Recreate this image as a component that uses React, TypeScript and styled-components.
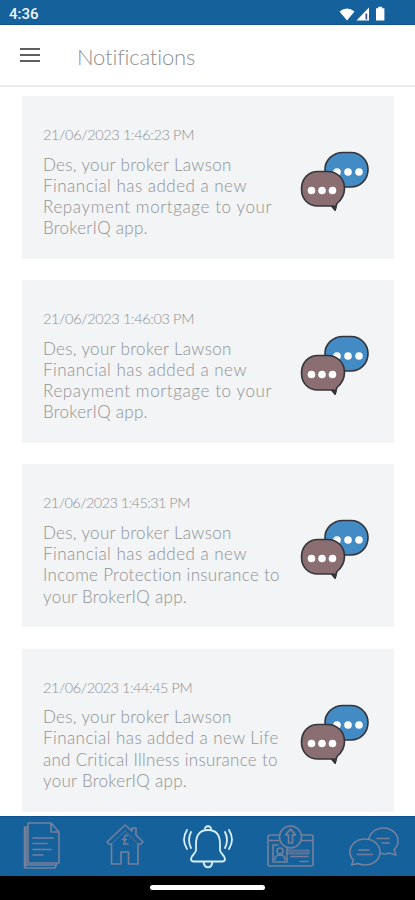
import React from "react";
import styled, { createGlobalStyle } from "styled-components";

const Global = createGlobalStyle`
  * { box-sizing: border-box; }
  html, body { margin: 0; padding: 0; background: #fff; }
  body { font-family: Lato, "Open Sans", sans-serif; overflow: hidden; }
  svg { display: block; flex: none; }
`;

const Screen = styled.div`
  width: 415px;
  height: 900px;
  display: flex;
  flex-direction: column;
  background: #fff;
  overflow: hidden;
`;

const StatusBar = styled.div`
  height: 25px;
  flex: none;
  display: flex;
  align-items: center;
  justify-content: space-between;
  padding: 3px 28px 0 9px;
  background: #15619c;
  border-bottom: 1px solid #0f528d;
`;

const Clock = styled.span`
  font: 500 15px/20px Roboto, sans-serif;
  color: #eef5fb;
`;

const Header = styled.header`
  height: 62px;
  flex: none;
  display: flex;
  align-items: center;
  padding: 0 20px 1px;
  gap: 37px;
  border-bottom: 2px solid #ebecec;
`;

const Burger = styled.div`
  width: 20px;
  height: 14px;
  display: flex;
  flex-direction: column;
  justify-content: space-between;
`;

const BurgerLine = styled.span`
  height: 2px;
  background: #606060;
`;

const Title = styled.h1`
  margin: 5px 0 0;
  font-size: 22px;
  font-weight: 300;
  line-height: 28px;
  color: #909090;
  letter-spacing: -0.15px;
`;

const List = styled.main`
  flex: 1;
  min-height: 0;
  overflow: hidden;
  padding: 9px 21px 0 22px;
  display: flex;
  flex-direction: column;
  gap: 21.2px;
`;

const Card = styled.article`
  height: 163px;
  flex: none;
  display: flex;
  justify-content: space-between;
  padding: 29px 24px 0 21px;
  background: #f2f4f6;
`;

const CardText = styled.div`
  white-space: nowrap;
  font-weight: 300;
  color: #909295;
`;

const Stamp = styled.div<{ $spacing: number }>`
  font-size: 14.5px;
  line-height: 20px;
  margin-bottom: 8.6px;
  letter-spacing: ${(p) => p.$spacing}px;
`;

const Line = styled.div<{ $spacing: number }>`
  font-size: 17px;
  line-height: 21.2px;
  letter-spacing: ${(p) => p.$spacing}px;
`;

const BubbleSlot = styled.div`
  padding-top: 26px;
`;

const NavBar = styled.nav`
  height: 60px;
  flex: none;
  display: grid;
  grid-template-columns: repeat(5, 83px);
  background: #15619c;
  border-top: 1px solid #0f528d;
`;

const NavItem = styled.div<{ $active?: boolean; $lift?: number }>`
  display: flex;
  align-items: center;
  justify-content: center;
  padding-bottom: ${(p) => p.$lift ?? 0}px;
  color: ${(p) => (p.$active ? "#d9efff" : "#77809a")};
`;

const GestureBar = styled.div`
  height: 24px;
  flex: none;
  display: flex;
  justify-content: center;
  padding-top: 9px;
  background: #000;
`;

const GesturePill = styled.span`
  width: 115px;
  height: 5px;
  border-radius: 3px;
  background: #fff;
`;

const StatusIcons = () => (
  <svg width="50" height="18" viewBox="0 0 50 18" fill="#fff">
    <path d="M2.500 6.600Q10 .4 17.500 6.600L10 15.500Z" />
    <path d="M32 2.500V15.500H19.500Z" />
    <path d="M28.500 8.500h1.700v6h-1.700z" fill="#30558e" />
    <path d="M39 3.300h2.200V1.800h4v1.500h2.200v12.200H39z" />
  </svg>
);

const Bubbles = () => (
  <svg width="70" height="61" viewBox="0 0 70 61" fill="none" stroke="#34343b" strokeWidth="1.6" strokeLinejoin="round">
    <path d="M43 1.500H51A17 17 0 0 1 68 18.500C68 29 60 36 51 36H43C32 36 25 28 25 18.500S33 1.500 43 1.500Z" fill="#428bc5" />
    <g fill="#fff" stroke="none">
      <circle cx="37" cy="21" r="3.800" /><circle cx="48" cy="21" r="3.800" /><circle cx="59" cy="21" r="3.800" />
    </g>
    <path d="M18 20.500H27C38 20.500 44.500 28 44.500 37.500C44.500 45 40.500 49.500 37 52.500L35 59L31.500 55H18C8 55 1.500 48 1.500 38S8 20.500 18 20.500Z" fill="#8a6e71" />
    <path d="M32 54.500l3.200 4.500 .8-4.500" fill="#34343b" />
    <g fill="#fff" stroke="none">
      <circle cx="11.500" cy="39.500" r="3.800" /><circle cx="22" cy="39.500" r="3.800" /><circle cx="32.500" cy="39.500" r="3.800" />
    </g>
  </svg>
);

const navSvg = { fill: "none", stroke: "currentColor", strokeWidth: 1.6, strokeLinejoin: "round", strokeLinecap: "round" } as const;

const DocumentIcon = () => (
  <svg width="38" height="48" viewBox="0 0 38 48" {...navSvg}>
    <path d="M5 1h23l8 9v31H5zM28 1v9h8M5 5H1.500v41H32l2-5M1.500 43H33M3 6v38" />
    <path d="M10 16h20M10 21.500h14M10 27.500h18M10 33h10" />
  </svg>
);

const HouseIcon = () => (
  <svg width="38" height="42" viewBox="0 0 38 42" {...navSvg}>
    <path d="M1 18L19 1l7 6V4h4v7l7 7-2 2h-3v20H22.500V28H15v12H5.500V20H3z" />
    <path d="M5.500 20L19 7l13 13" strokeWidth=".6" />
    <path d="M21.500 11.500c-3-1-3.500 1.500-3 4s0 4-1 4.500h4.500M16.500 15.500h4" strokeWidth="1.600" />
  </svg>
);

const BellIcon = () => (
  <svg width="52" height="44" viewBox="0 0 52 44" {...navSvg} strokeWidth="1.800">
    <path d="M26 5C17 5 14 11 14 19v6c0 4-5 5-5 9 0 2 1 2.500 3 2.500h28c2 0 3-.5 3-2.500 0-4-5-5-5-9v-6C38 11 35 5 26 5Z" />
    <path d="M23 5c-1-5 7-5 6 0M21.500 37c1 7 8 7 9 0" />
    <path d="M9 7q-4 8 0 16M5 5q-6 9.500 0 19M43 7q4 8 0 16M47 5q6 9.500 0 19" />
  </svg>
);

const UploadCardIcon = () => (
  <svg width="47" height="43" viewBox="0 0 47 43" {...navSvg}>
    <path d="M12 10H3q-2 0-2 2v27q0 2 2 2h41q2 0 2-2V12q0-2-2-2h-9M1 15.500h11M35 15.500h11M11 20H6v17h14V23" />
    <circle cx="23.500" cy="12" r="11" />
    <path d="M23.500 4l-5 6h3v8h4v-8h3z" />
    <circle cx="13" cy="26" r="3" />
    <path d="M8 35q0-5 5-5t5 5M33 36.500h8M24 31.500h17" />
    <path d="M21 25h21v4H21z" fill="currentColor" fillOpacity=".5" strokeWidth=".7" />
  </svg>
);

const ChatIcon = () => (
  <svg width="50" height="40" viewBox="0 0 50 40" {...navSvg}>
    <path d="M19.500 12C22 5 27 1 34 1c9 0 15 6 15 13 0 4-2 7-4 9l2 5-7-2q-5 2-9 0" />
    <path d="M16 12c9 0 15 6 15 13s-6 13-15 13q-4 0-7-1.500L2.500 38l2-5C2 31 1 28 1 25c0-7 6-13 15-13Z" />
    <path d="M10 23h10M8.500 27.500h15M28 11.500h12M33 16h7" />
  </svg>
);

type TextLine = [text: string, spacing: number];

const greeting: TextLine = ["Des, your broker Lawson", 0.33];
const addedNew: TextLine = ["Financial has added a new", 0.48];
const repayment: TextLine = ["Repayment mortgage to your", 0.6];

const notices: { stamp: TextLine; lines: TextLine[] }[] = [
  {
    stamp: ["21/06/2023 1:46:23 PM", -0.35],
    lines: [greeting, addedNew, repayment, ["BrokerIQ app.", 0.27]],
  },
  {
    stamp: ["21/06/2023 1:46:03 PM", -0.35],
    lines: [greeting, addedNew, repayment, ["BrokerIQ app.", 0.27]],
  },
  {
    stamp: ["21/06/2023 1:45:31 PM", -0.55],
    lines: [greeting, addedNew, ["Income Protection insurance to", 0.29], ["your BrokerIQ app.", 0.3]],
  },
  {
    stamp: ["21/06/2023 1:44:45 PM", -0.43],
    lines: [greeting, ["Financial has added a new Life", 0.43], ["and Critical Illness insurance to", 0.27], ["your BrokerIQ app.", 0.3]],
  },
];

export default function App() {
  return (
    <Screen>
      <Global />
      <StatusBar>
        <Clock>4:36</Clock>
        <StatusIcons />
      </StatusBar>
      <Header>
        <Burger><BurgerLine /><BurgerLine /><BurgerLine /></Burger>
        <Title>Notifications</Title>
      </Header>
      <List>
        {notices.map(({ stamp, lines }) => (
          <Card key={stamp[0]}>
            <CardText>
              <Stamp $spacing={stamp[1]}>{stamp[0]}</Stamp>
              {lines.map(([text, spacing]) => (
                <Line key={text} $spacing={spacing}>{text}</Line>
              ))}
            </CardText>
            <BubbleSlot><Bubbles /></BubbleSlot>
          </Card>
        ))}
      </List>
      <NavBar>
        <NavItem $lift={2}><DocumentIcon /></NavItem>
        <NavItem $lift={4}><HouseIcon /></NavItem>
        <NavItem $active><BellIcon /></NavItem>
        <NavItem $lift={1}><UploadCardIcon /></NavItem>
        <NavItem><ChatIcon /></NavItem>
      </NavBar>
      <GestureBar><GesturePill /></GestureBar>
    </Screen>
  );
}
